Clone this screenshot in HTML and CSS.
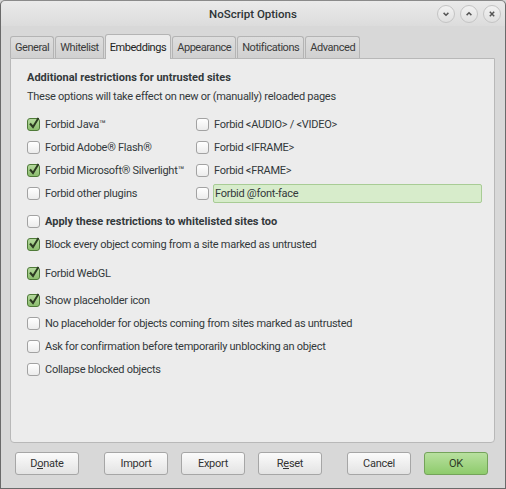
FILE: index.html
```html
<!DOCTYPE html>
<html>
<head>
<meta charset="utf-8">
<link rel="stylesheet" href="styles.css">
</head>
<body>
<div class="window">
  <div class="titlebar">
    <div class="title">NoScript Options</div>
    <div class="wbtns">
      <span class="wbtn"><svg width="10" height="10" viewBox="0 0 10 10"><path d="M2.6 3.9 L5 6.2 L7.4 3.9" fill="none" stroke="#555" stroke-width="1.5"/></svg></span>
      <span class="wbtn"><svg width="10" height="10" viewBox="0 0 10 10"><path d="M2.6 6.1 L5 3.8 L7.4 6.1" fill="none" stroke="#555" stroke-width="1.5"/></svg></span>
      <span class="wbtn"><svg width="10" height="10" viewBox="0 0 10 10"><path d="M2.8 2.8 L7.2 7.2 M7.2 2.8 L2.8 7.2" fill="none" stroke="#555" stroke-width="1.5"/></svg></span>
    </div>
  </div>
  <div class="tabs">
    <div class="tab">General</div>
    <div class="tab">Whitelist</div>
    <div class="tab active">Embeddings</div>
    <div class="tab">Appearance</div>
    <div class="tab">Notifications</div>
    <div class="tab">Advanced</div>
  </div>
  <div class="panel">
    <div class="heading">Additional restrictions for untrusted sites</div>
    <div class="note">These options will take effect on new or (manually) reloaded pages</div>
    <div class="grid">
      <div class="col">
        <label class="row"><span class="cb on"></span>Forbid Java™</label>
        <label class="row"><span class="cb"></span>Forbid Adobe® Flash®</label>
        <label class="row"><span class="cb on"></span>Forbid Microsoft® Silverlight™</label>
        <label class="row"><span class="cb"></span>Forbid other plugins</label>
      </div>
      <div class="col col2">
        <label class="row"><span class="cb"></span>Forbid &lt;AUDIO&gt; / &lt;VIDEO&gt;</label>
        <label class="row"><span class="cb"></span>Forbid &lt;IFRAME&gt;</label>
        <label class="row"><span class="cb"></span>Forbid &lt;FRAME&gt;</label>
        <label class="row"><span class="cb"></span><span class="focus">Forbid @font-face</span></label>
      </div>
    </div>
    <label class="row r-apply"><span class="cb"></span><b>Apply these restrictions to whitelisted sites too</b></label>
    <label class="row r-block"><span class="cb on"></span>Block every object coming from a site marked as untrusted</label>
    <label class="row r-webgl"><span class="cb on"></span>Forbid WebGL</label>
    <label class="row r-show"><span class="cb on"></span>Show placeholder icon</label>
    <label class="row r-nop"><span class="cb"></span>No placeholder for objects coming from sites marked as untrusted</label>
    <label class="row r-ask"><span class="cb"></span>Ask for confirmation before temporarily unblocking an object</label>
    <label class="row r-col"><span class="cb"></span>Collapse blocked objects</label>
  </div>
  <div class="buttons">
    <div class="btn"><span>D<u>o</u>nate</span></div>
    <div class="btn b-import">Import</div>
    <div class="btn">Export</div>
    <div class="btn">R<u>e</u>set</div>
    <div class="btn b-cancel">Cancel</div>
    <div class="btn ok">OK</div>
  </div>
</div>
</body>
</html>
```
FILE: styles.css
```css
html, body { margin: 0; padding: 0; }
body {
  width: 506px; height: 489px; overflow: hidden;
  font-family: Roboto, "Noto Sans", sans-serif;
  font-size: 11px; color: #33393b; letter-spacing: -0.27px;
  background: #d6d6d6;
}
b, .heading { letter-spacing: 0; }
.window {
  width: 506px; height: 489px; box-sizing: border-box;
  border: 1px solid #6a6a6a; border-top-color: #8a8a8a;
  border-radius: 5px 5px 0 0;
  background: #d8d8d8;
}
.titlebar {
  height: 25px; position: relative;
  display: flex; align-items: center; justify-content: center;
  background: linear-gradient(#eaeaea, #dcdcdc);
  border-radius: 5px 5px 0 0;
}
.title { font-size: 11.5px; color: #2e3436; font-weight: 500; letter-spacing: 0; }
.wbtns {
  position: absolute; right: 4px; top: 4px;
  display: flex; gap: 5px;
}
.wbtn {
  width: 16px; height: 16px; border-radius: 50%;
  border: 1px solid #c4c4c4;
  background: linear-gradient(#f2f2f2, #e0e0e0);
  display: flex; align-items: center; justify-content: center;
}
.tabs {
  display: flex; align-items: flex-end; height: 32px;
  margin-left: 9px; box-sizing: border-box;
}
.tab {
  height: 22px; padding: 0 4px; box-sizing: border-box;
  display: flex; align-items: center;
  border: 1px solid #b4b4b4; border-bottom: none;
  border-radius: 3px 3px 0 0;
  background: linear-gradient(#dedede, #d0d0d0);
  color: #3b3b3b; margin-right: 1px; letter-spacing: -0.45px;
}
.tab.active {
  height: 25px; background: #ececec; color: #222;
  padding: 0 4px; position: relative; top: 1px; margin-bottom: 0;
}
.panel {
  margin: 0 10px 0 9px; height: 385px; box-sizing: border-box;
  border: 1px solid #b8b8b8; border-radius: 0 0 4px 4px;
  background: #ececec;
  padding: 12px 0 0 16px;
}
.heading { font-weight: bold; height: 18px; line-height: 14px; }
.note { height: 18px; line-height: 15px; }
.grid { display: flex; margin-top: 6px; }
.col { width: 169px; display: flex; flex-direction: column; }
.col2 { flex: 1; }
.row {
  display: flex; align-items: center; height: 23px; white-space: nowrap;
}
.cb {
  width: 11px; height: 11px; flex: none;
  border: 1px solid #a2a2a2; border-radius: 3px;
  background: linear-gradient(#ffffff, #ececec);
  margin-right: 5px; position: relative;
}
.cb.on {
  border-color: #4f7a38;
  background: linear-gradient(#b4d99d, #8cbd6e);
}
.cb.on::after {
  content: ""; position: absolute; left: 1px; top: -2px;
  width: 10px; height: 12px;
  background: no-repeat center/contain url("data:image/svg+xml;utf8,<svg xmlns='http://www.w3.org/2000/svg' viewBox='0 0 10 12'><path d='M1 6.5 L4 10 L9.5 1' fill='none' stroke='%232c3a22' stroke-width='2'/></svg>");
}
.focus {
  flex: 1; margin-right: 12px; height: 17px; line-height: 17px;
  background: #d7eccb; border: 1px solid #a8cc95; border-radius: 2px;
  padding-left: 1px; margin-left: -1px;
}
.r-apply { margin-top: 5px; }
.r-webgl { margin-top: 6px; }
.r-show { margin-top: 4px; }
.buttons {
  display: flex; padding: 9px 0 0 14px;
}
.btn {
  width: 64px; height: 23px; box-sizing: border-box;
  border: 1px solid #a6a6a6; border-radius: 3px;
  background: linear-gradient(#fbfbfb, #e3e3e3);
  display: flex; align-items: center; justify-content: center;
  color: #333; margin-right: 13px;
}
.btn u { text-decoration: none; border-bottom: 1px solid #333; line-height: 9px; display: inline-block; }
.b-import { margin-left: 12px; }
.b-cancel { margin-left: 12px; }
.ok {
  border-color: #74a35a;
  background: linear-gradient(#b8e09f, #8ecb6c);
  color: #2d3a25;
}
```
